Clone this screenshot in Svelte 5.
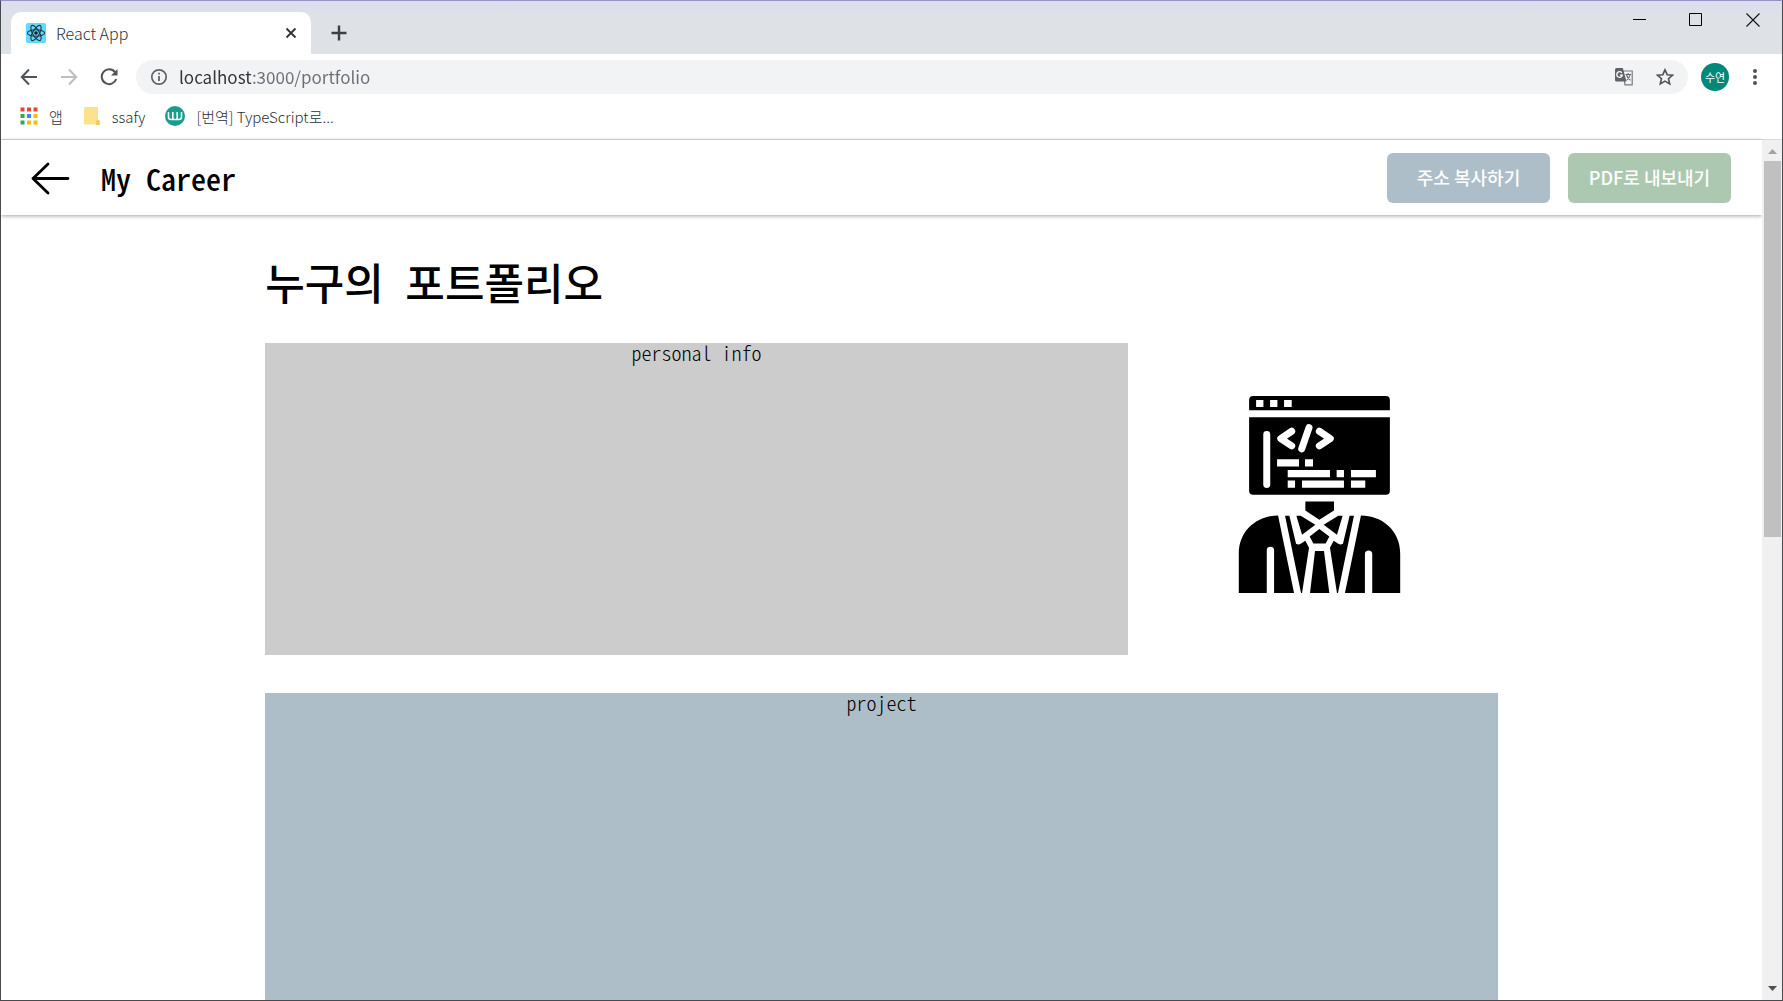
<script>
  let address = $state('localhost:3000/portfolio');
  const dots = [
    '#ea4335', '#ea4335', '#ea4335',
    '#34a853', '#4285f4', '#fbbc05',
    '#34a853', '#fbbc05', '#fbbc05'
  ];
</script>

<div class="window">
  <header class="tabs">
    <div class="tab">
      <svg class="favicon" viewBox="0 0 20 20" aria-hidden="true">
        <rect width="20" height="20" rx="2" fill="#61dafb" />
        <g fill="none" stroke="#20333d" stroke-width="1.1">
          <ellipse cx="10" cy="10" rx="8.6" ry="3.3" />
          <ellipse cx="10" cy="10" rx="8.6" ry="3.3" transform="rotate(60 10 10)" />
          <ellipse cx="10" cy="10" rx="8.6" ry="3.3" transform="rotate(120 10 10)" />
        </g>
        <circle cx="10" cy="10" r="1.8" fill="#10222b" />
      </svg>
      <span class="tab-title">React App</span>
      <button class="icon" aria-label="Close tab">
        <svg width="12" height="12" viewBox="0 0 12 12"><path d="M1.5 1.5l9 9M10.500 1.500l-9 9" stroke="#303236" stroke-width="1.800" /></svg>
      </button>
    </div>
    <button class="icon add" aria-label="New tab">
      <svg width="16" height="16" viewBox="0 0 16 16"><path d="M8 .5v15M.5 8h15" stroke="#3c4043" stroke-width="2.400" /></svg>
    </button>
    <div class="controls">
      <button class="icon" aria-label="Minimize"><svg width="14" height="14" viewBox="0 0 14 14"><path d="M1 6.500h13" stroke="#000" /></svg></button>
      <button class="icon" aria-label="Maximize"><svg width="14" height="14" viewBox="0 0 14 14"><path d="M.5 .5h12v12h-12z" fill="none" stroke="#000" /></svg></button>
      <button class="icon" aria-label="Close"><svg width="14" height="14" viewBox="0 0 14 14"><path d="M.5 .5l13 13M13.500 .5l-13 13" stroke="#111" stroke-width="1.100" /></svg></button>
    </div>
  </header>

  <div class="toolbar">
    <button class="icon nav" aria-label="Back"><svg width="18" height="18" viewBox="0 0 18 18"><path d="M17 9H2M9 1.500L1.800 9l7.200 7.500" fill="none" stroke="#505357" stroke-width="2" /></svg></button>
    <button class="icon nav" aria-label="Forward"><svg width="18" height="18" viewBox="0 0 18 18"><path d="M1 9h15M9 1.500L16.200 9 9 16.500" fill="none" stroke="#bcbec0" stroke-width="2" /></svg></button>
    <button class="icon nav" aria-label="Reload"><svg width="18" height="18" viewBox="0 0 18 18"><path d="M15 4.200A7.400 7.400 0 1 0 16.200 11" fill="none" stroke="#505357" stroke-width="2" /><path d="M17.500 1v6.500H11z" fill="#505357" /></svg></button>
    <div class="omnibox">
      <svg width="18" height="18" viewBox="0 0 18 18" aria-hidden="true"><circle cx="9" cy="9" r="7.200" fill="none" stroke="#5f6368" stroke-width="1.700" /><path d="M9 8v5M9 4.700v1.800" stroke="#5f6368" stroke-width="1.800" /></svg>
      <input aria-label="Address" bind:value={address} />
      <button class="icon" aria-label="Translate">
        <svg width="19" height="19" viewBox="0 0 19 19">
          <path d="M8 4h9.200v13.800H10z" fill="#f4f5f6" stroke="#77797d" stroke-width="1.200" />
          <path d="M1.500 1h6.300l3.700 13.500h-10A1.500 1.500 0 0 1 0 13V2.500A1.500 1.500 0 0 1 1.500 1z" fill="#5f6368" />
          <path d="M6.800 5.800A2.800 2.800 0 1 0 7.300 8.200H4.900" fill="none" stroke="#fff" stroke-width="1.300" />
          <path d="M10.500 7.500H16M13.200 6v1.500M11.500 8c.8 2.600 2 4 4 5.300M15 8c-.5 2.500-1.800 4.200-3.500 5.400" fill="none" stroke="#5f6368" stroke-width="1.100" />
        </svg>
      </button>
      <button class="icon" aria-label="Bookmark this page"><svg width="18" height="18" viewBox="0 0 18 18"><path d="M9 1.800l2.200 4.900 5.300.5-4 3.500 1.200 5.200L9 13.100l-4.700 2.800 1.200-5.200-4-3.500 5.300-.5z" fill="none" stroke="#505357" stroke-width="1.600" /></svg></button>
    </div>
    <button class="avatar">수연</button>
    <button class="icon" aria-label="Menu"><svg width="4" height="18" viewBox="0 0 4 18" fill="#505357"><circle cx="2" cy="3" r="2" /><circle cx="2" cy="9" r="2" /><circle cx="2" cy="15" r="2" /></svg></button>
  </div>

  <nav class="bookmarks">
    <a href="#apps">
      <svg width="18" height="18" viewBox="0 0 18 18" aria-hidden="true">
        {#each dots as fill, i}
          <rect x={(i % 3) * 6.5 + 0.5} y={Math.floor(i / 3) * 6.5 + 0.5} width="4" height="4" {fill} />
        {/each}
      </svg>
      앱
    </a>
    <a href="#ssafy">
      <svg width="18" height="20" viewBox="0 0 18 20" aria-hidden="true"><path d="M2 1h13v13l2 1v3.500H2a1 1 0 0 1-1-1V2a1 1 0 0 1 1-1z" fill="#fbe38e" /><path d="M13 19v-4l2-1.500 1.500 1V19z" fill="#f0cc5c" /></svg>
      ssafy
    </a>
    <a href="#typescript">
      <svg width="20" height="20" viewBox="0 0 20 20" aria-hidden="true"><circle cx="10" cy="10" r="10" fill="#1a9c8a" /><path d="M3.500 6v5q0 2.500 2.500 2.500h8q2.500 0 2.500-2.500V6M7.800 6v7M12.200 6v7" fill="none" stroke="#fff" stroke-width="1.600" /></svg>
      [번역] TypeScript로...
    </a>
  </nav>

  <div class="viewport">
    <div class="page">
      <header class="app-bar">
        <button class="icon" aria-label="Go back"><svg width="40" height="34" viewBox="0 0 40 34"><path d="M38 17.500H3M18 3L3 17.500 18 32" fill="none" stroke="#000" stroke-width="2.800" stroke-linecap="round" stroke-linejoin="round" /></svg></button>
        <h2>My Career</h2>
        <button class="action copy">주소 복사하기</button>
        <button class="action export">PDF로 내보내기</button>
      </header>

      <main>
        <h1>누구의 포트폴리오</h1>
        <div class="intro">
          <section class="info">personal info</section>
          <div class="portrait">
            <svg viewBox="54 47 489 592" role="img" aria-label="Developer">
              <path d="M87 90V59q0-12 12-12h399q12 0 12 12v31zM87 111h423v221q0 12-12 12H99q-12 0-12-12zM256 364h86v27l-44 28-42-28z" />
              <path d="M56 639V520C56 450 112 406 174 406L222 639H162V511a11 11 0 0 0-22 0v128zM541 639V520C541 450 485 406 423 406L375 639H435V522a11 11 0 0 1 22 0v117z" />
              <path d="M195 407h13l20 84q7 5 14 0l14-9 11 21-21 136h-3zM402 407h-13l-20 84q-7 5-14 0l-14-9-11 21 21 136h3z" />
              <path d="M229 407h13l44 27-40 30zM368 407h-13l-44 27 40 30zM298 447l30 22-11 21h-37l-11-21zM285 513h27l16 126h-58z" />
              <g fill="#fff">
                <path d="M108 59h22v21h-22zM150 59h22v21h-22zM192 59h23v21h-23zM171 237h66v22h-66zM255 237h24v22h-24zM203 269h127v22H203zM350 269h22v22h-22zM393 269h75v22h-75zM203 301h22v22h-22zM246 301h126v22H246zM393 301h43v22h-43z" />
              </g>
              <path d="M140 163v150M215 153l-33 22 33 22M267 142l-22 64M298 153l33 22-33 22" fill="none" stroke="#fff" stroke-width="21" stroke-linecap="round" stroke-linejoin="round" />
            </svg>
          </div>
        </div>
        <section class="project">project</section>
      </main>
    </div>

    <div class="scrollbar" aria-hidden="true">
      <svg width="9" height="5" viewBox="0 0 9 5"><path d="M0 5L4.500 0 9 5z" fill="#a3a3a3" /></svg>
      <div class="track"><div class="thumb"></div></div>
      <svg width="9" height="5" viewBox="0 0 9 5"><path d="M0 0l4.500 5L9 0z" fill="#505050" /></svg>
    </div>
  </div>
</div>

<style>
  :global(body) {
    margin: 0;
  }
  .window {
    box-sizing: border-box;
    display: flex;
    flex-direction: column;
    height: 100vh;
    overflow: hidden;
    border: 1px solid #4a4a4c;
    border-top-color: #9a94c6;
    background: #fff;
    font-family: 'Noto Sans CJK KR', sans-serif;
    font-weight: 300;
    color: #2c2f33;
  }
  button,
  input {
    border: 0;
    padding: 0;
    background: none;
    font: inherit;
    color: inherit;
  }
  .icon {
    display: flex;
    align-items: center;
    justify-content: center;
    flex: none;
  }
  svg {
    display: block;
    flex: none;
  }
  .tabs {
    display: flex;
    align-items: center;
    flex: none;
    height: 53px;
    padding-left: 10px;
    background: linear-gradient(#dcdcf0, #dee1e6 12px);
  }
  .tab {
    display: flex;
    align-items: center;
    align-self: flex-end;
    box-sizing: border-box;
    width: 300px;
    height: 42px;
    padding: 0 14px 0 15px;
    gap: 10px;
    border-radius: 10px 10px 0 0;
    background: #fff;
    font-size: 16px;
  }
  .favicon {
    width: 20px;
    height: 20px;
  }
  .tab-title {
    flex: 1;
  }
  .add {
    align-self: flex-end;
    height: 42px;
    margin-left: 20px;
  }
  .controls {
    display: flex;
    gap: 43px;
    align-self: flex-start;
    margin: 12px 22px 0 auto;
  }
  .toolbar {
    display: flex;
    align-items: center;
    flex: none;
    height: 45px;
    padding: 0 25px 0 19px;
  }
  .nav {
    margin-right: 22px;
  }
  .omnibox {
    display: flex;
    align-items: center;
    flex: 1;
    gap: 22px;
    height: 34px;
    margin-right: 13px;
    margin-left: -4px;
    padding: 0 14px;
    border-radius: 17px;
    background: #f1f3f4;
  }
  .omnibox input {
    flex: 1;
    margin-left: -11px;
    font-size: 17px;
    font-weight: 400;
    background: linear-gradient(90deg, #303236 72px, #6b6f74 72px);
    background-clip: text;
    color: transparent;
  }
  .avatar {
    width: 28px;
    height: 28px;
    margin-right: 24px;
    border-radius: 50%;
    background: #00897b;
    color: #fff;
    font-size: 11px;
    font-weight: 400;
    line-height: 28px;
  }
  .bookmarks {
    display: flex;
    align-items: center;
    flex: none;
    gap: 20px;
    height: 41px;
    box-sizing: border-box;
    padding: 0 19px 6px;
    border-bottom: 1px solid #d8dadc;
    font-size: 15px;
  }
  .bookmarks a {
    display: flex;
    align-items: center;
    gap: 11px;
    color: inherit;
    text-decoration: none;
  }
  .viewport {
    display: flex;
    flex: 1;
    min-height: 0;
  }
  .page {
    display: flex;
    flex-direction: column;
    flex: 1;
    min-width: 0;
    color: #000;
  }
  .app-bar {
    display: flex;
    align-items: center;
    flex: none;
    height: 75px;
    padding: 0 31px 0 29px;
    box-shadow: 0 1px 4px rgb(0 0 0 / 35%);
  }
  h1,
  h2,
  .info,
  .project {
    font-feature-settings: 'hwid';
  }
  h2 {
    flex: 1;
    margin: 0 0 0 31px;
    font-size: 30px;
    font-weight: 500;
  }
  .action {
    width: 163px;
    height: 50px;
    margin-left: 18px;
    padding-bottom: 2px;
    border-radius: 6px;
    color: #fff;
    font-size: 18px;
    font-weight: 500;
  }
  .copy {
    background: #adbec9;
  }
  .export {
    background: #adc8b1;
  }
  main {
    display: flex;
    flex-direction: column;
    flex: 1;
    width: 70%;
    min-height: 0;
    margin: 0 auto;
  }
  h1 {
    margin: 36px 0 32px;
    font-size: 43px;
    font-weight: 500;
    line-height: 60px;
  }
  .intro {
    display: flex;
    flex: none;
  }
  .info,
  .project {
    font-size: 20px;
    line-height: 19px;
    text-align: center;
  }
  .info {
    flex: none;
    width: 70%;
    height: 312px;
    background: #ccc;
  }
  .portrait {
    display: flex;
    align-items: center;
    justify-content: center;
    flex: 1;
    padding: 0 0 10px 14px;
  }
  .portrait svg {
    width: 163px;
    height: 197px;
  }
  .project {
    flex: 1;
    margin-top: 38px;
    background: #adbec9;
  }
  .scrollbar {
    display: flex;
    flex-direction: column;
    align-items: center;
    flex: none;
    box-sizing: border-box;
    width: 20px;
    padding: 9px 0;
    gap: 7px;
    background: #f0f0f0;
  }
  .track {
    flex: 1;
    align-self: stretch;
    padding: 0 1px 0 2px;
  }
  .thumb {
    height: 46%;
    background: #c0c0c0;
  }
</style>
